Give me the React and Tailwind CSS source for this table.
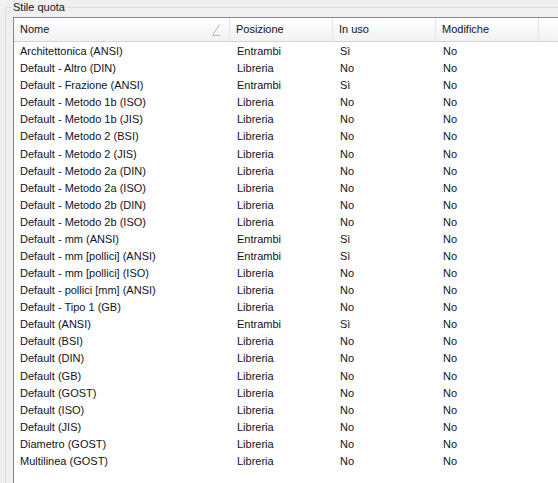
import React from "react";

const rows = [
  ["Architettonica (ANSI)", "Entrambi", "Sì", "No"],
  ["Default - Altro (DIN)", "Libreria", "No", "No"],
  ["Default - Frazione (ANSI)", "Entrambi", "Sì", "No"],
  ["Default - Metodo 1b (ISO)", "Libreria", "No", "No"],
  ["Default - Metodo 1b (JIS)", "Libreria", "No", "No"],
  ["Default - Metodo 2 (BSI)", "Libreria", "No", "No"],
  ["Default - Metodo 2 (JIS)", "Libreria", "No", "No"],
  ["Default - Metodo 2a (DIN)", "Libreria", "No", "No"],
  ["Default - Metodo 2a (ISO)", "Libreria", "No", "No"],
  ["Default - Metodo 2b (DIN)", "Libreria", "No", "No"],
  ["Default - Metodo 2b (ISO)", "Libreria", "No", "No"],
  ["Default - mm (ANSI)", "Entrambi", "Sì", "No"],
  ["Default - mm [pollici] (ANSI)", "Entrambi", "Sì", "No"],
  ["Default - mm [pollici] (ISO)", "Libreria", "No", "No"],
  ["Default - pollici [mm] (ANSI)", "Libreria", "No", "No"],
  ["Default - Tipo 1 (GB)", "Libreria", "No", "No"],
  ["Default (ANSI)", "Entrambi", "Sì", "No"],
  ["Default (BSI)", "Libreria", "No", "No"],
  ["Default (DIN)", "Libreria", "No", "No"],
  ["Default (GB)", "Libreria", "No", "No"],
  ["Default (GOST)", "Libreria", "No", "No"],
  ["Default (ISO)", "Libreria", "No", "No"],
  ["Default (JIS)", "Libreria", "No", "No"],
  ["Diametro (GOST)", "Libreria", "No", "No"],
  ["Multilinea (GOST)", "Libreria", "No", "No"],
];

const HeaderCell = ({ w, children }) => (
  <div className={`${w} h-full flex items-center pl-[6px] border-r border-[#e3e5e8] relative`}>
    {children}
  </div>
);

export default function App() {
  return (
    <div
      className="w-[558px] h-[483px] bg-[#f0f0f0] overflow-hidden text-[11px] text-[#10131c]"
      style={{ fontFamily: '"Liberation Sans", Arial, sans-serif' }}
    >
      {/* Group box */}
      <div className="relative ml-[5px] mt-[7px] w-[600px] h-[520px] border border-[#d5dfe5] rounded-[3px] pl-[7px] pt-[9px]">
        <span className="absolute -top-[7px] left-[5px] px-[2px] bg-[#f0f0f0] leading-[13px]">Stile quota</span>

        {/* List view */}
        <div className="w-[620px] h-[500px] bg-white border border-[#828790]">
          <div className="flex h-[24px] border-b border-[#d5d5d5] bg-gradient-to-b from-white to-[#f1f2f4]">
            <HeaderCell w="w-[216px]">
              Nome
              <svg className="absolute right-[8px] top-[6px]" width="10" height="12" viewBox="0 0 10 12">
                <path d="M8.5 0.5 L1.5 11.5 L9.5 11.5" fill="none" stroke="#b5b8bd" strokeWidth="1" />
              </svg>
            </HeaderCell>
            <HeaderCell w="w-[103px]">Posizione</HeaderCell>
            <HeaderCell w="w-[103px]">In uso</HeaderCell>
            <HeaderCell w="w-[103px]">Modifiche</HeaderCell>
            <div className="flex-1" />
          </div>
          <div className="pt-[1px]">
            {rows.map((r, i) => (
              <div key={i} className="flex h-[17.08px] items-center leading-[17px]">
                <div className="w-[216px] pl-[6px] whitespace-nowrap">{r[0]}</div>
                <div className="w-[103px] pl-[7px]">{r[1]}</div>
                <div className="w-[103px] pl-[7px]">{r[2]}</div>
                <div className="w-[103px] pl-[7px]">{r[3]}</div>
              </div>
            ))}
          </div>
        </div>
      </div>
    </div>
  );
}
